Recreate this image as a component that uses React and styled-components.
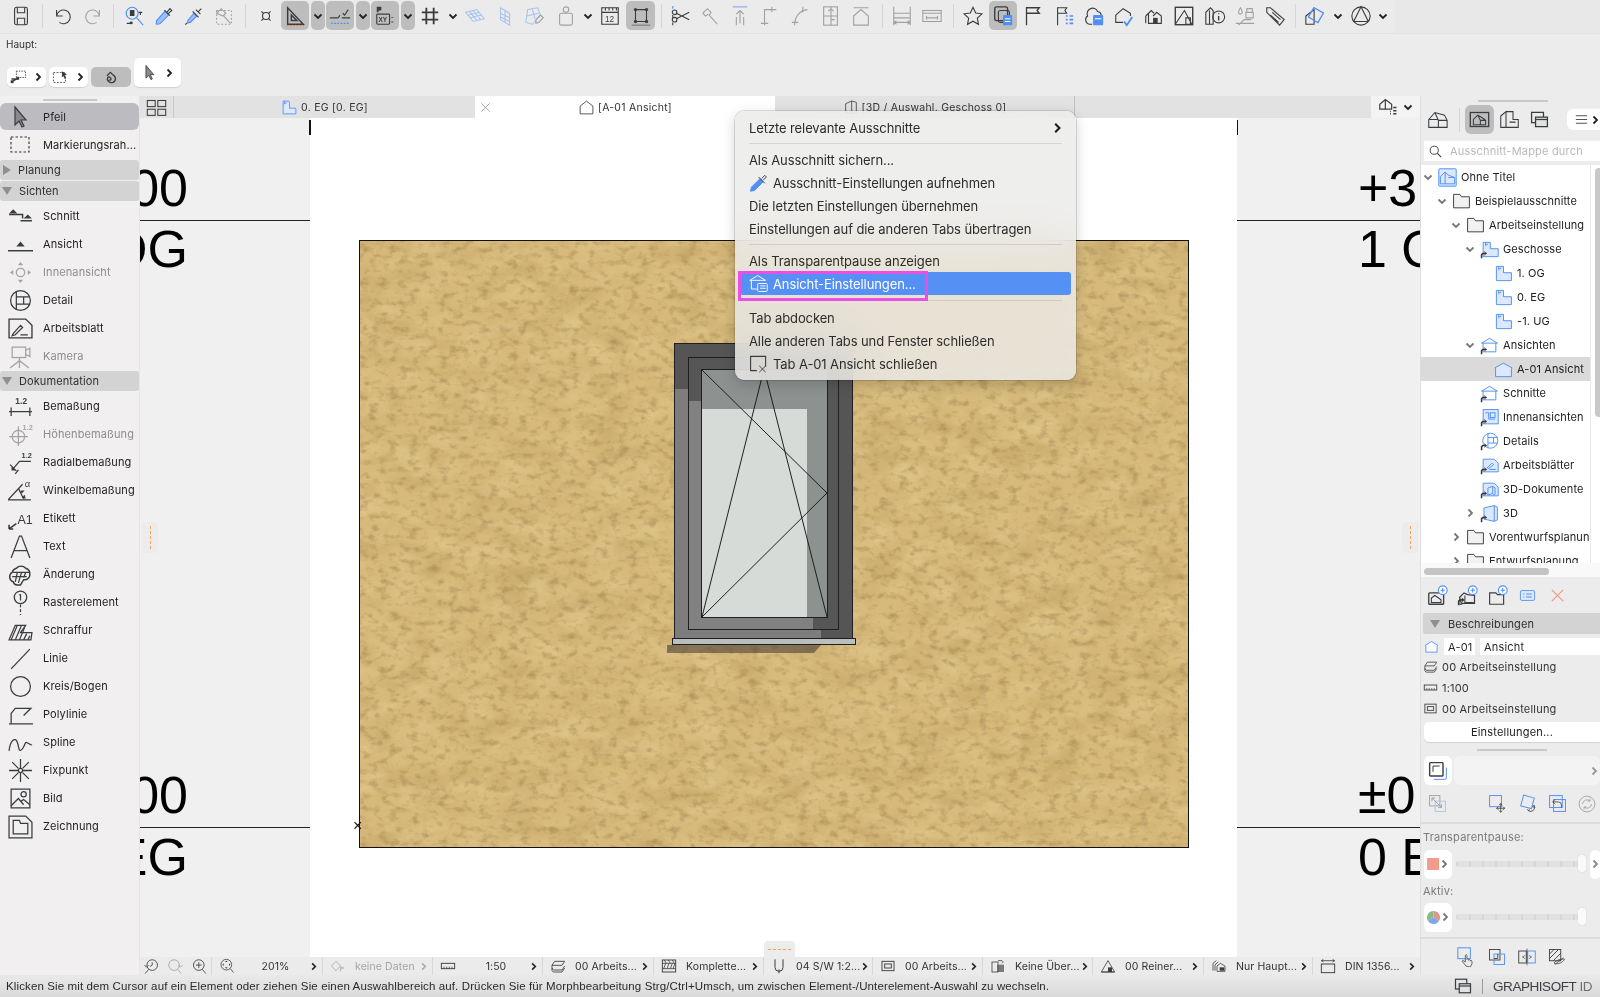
import React from 'react';
import styled, {createGlobalStyle} from 'styled-components';

const BLUE = '#4f8ff7';
const UI = '"Inter", "Liberation Sans", sans-serif';

const Global = createGlobalStyle`
    html, body{
        margin:0;
        padding:0;
        background:#ececec;
    }
    body{
        font-family:${UI};
        color:#2b2b2b;
    }
`;

const Glyph = styled.svg`
    width:${({$s}) => $s}px;
    height:${({$s}) => $s}px;
    flex:none;
    fill:none;
    stroke:currentColor;
    stroke-width:1.2;
    color:${({$c}) => $c || '#3a3d40'};
    opacity:${({$dim}) => $dim ? .42 : 1};
    .b{stroke:${BLUE};}
    .f{fill:currentColor;stroke:none;}
    .fb{fill:${BLUE};stroke:none;}
    .lb{fill:#dbe8fd;stroke:${BLUE};}
    text{fill:currentColor;stroke:none;font-family:"Liberation Sans",sans-serif;font-weight:700;}
    text.n{font-weight:400;}
`;

const Badge = <path className="f" d="M1 23v-5l2-2h3l-1-2 4 3-4 3 1-2H4l-1 1v4z"/>;

const ICONS = {
    save:<><rect x="5" y="2.5" width="14" height="19" rx="2"/><path d="M8 2.5v6h8v-6M8 21.5v-7h8v7"/></>,
    undo:<path d="M5 12a7.500 7.500 0 1 1 3 7M5 5.500V12h6.500"/>,
    redo:<path d="M19 12a7.500 7.500 0 1 0-3 7M19 5.500V12h-6.500"/>,
    find:<><circle className="b" cx="10" cy="9" r="6.500"/><path className="b" d="M15 14l7 8"/><rect className="f" x="7.500" y="5.500" width="5" height="6.500"/><path d="M17 8h4M19 8v3M4 20h6"/><circle className="f" cx="9" cy="19.500" r="1.600"/></>,
    pick:<><path className="b" d="M13 7l4 4-9.500 9.500-3.500.5-.5-.5.5-3.500z" fill="#9dc0fa"/><path d="M12.500 5.500l6 6M15 8l3.500-4 2 2-4 3.500"/></>,
    syringe:<><path className="b" d="M12 9l3 3-7 7-3 .5.5-3z" fill="#9dc0fa"/><path d="M10.500 7l6.500 6.500M14 5l5 5M16.500 7.500L20 4M4.500 19.500L2.500 21.500"/></>,
    hammer:<><rect x="4" y="6" width="16" height="15" strokeDasharray="2 2"/><path d="M4 9l5-5 5 5-3 3zM11 11l8 9"/></>,
    snap:<><path d="M7 7l10 10M17 7L7 17"/><circle cx="12" cy="12" r="3.800" fill="#ececec"/></>,
    square:<><path d="M4 3v18h17zM8 11v6h6z" strokeWidth="1.600"/><path d="M3 22.500h19" stroke="#e58a3a" strokeDasharray="2 1.500" strokeWidth="1.500"/></>,
    guide:<><path d="M1 14h9M14 14h9M10 14l2-3M15 9l2 2 4-6"/><path className="b" d="M2 20h20" strokeDasharray="2 1.500" strokeWidth="1.500"/></>,
    xy:<><path className="f" d="M3 2h5v4H5v2H3z"/><rect x="3" y="10" width="14" height="11" rx="1"/><text x="4.800" y="18.500" fontSize="7">XY</text><path d="M20 13v1M20 18v1" strokeWidth="2"/></>,
    grid:<path d="M8 3v18M16 3v18M3 8h18M3 16h18" strokeWidth="2"/>,
    plane:<path className="b" d="M2 8l12-3 8 10-12 3zM6 7l8 10M10 6l8 10M5 11l12-3M7 14l12-3"/>,
    plane2:<path className="b" d="M7 3l10 6v13L7 16zM12 6v13M7 9l10 5M7 13l10 5"/>,
    planepick:<><path className="b" d="M4 5l11-2 3 8-9 10-7-2zM9 4l3 11M3 12l13-3"/><path d="M13 16l5-5 3 3-5 5-3 1z"/></>,
    weight:<><rect x="5" y="9" width="14" height="13" rx="2"/><circle cx="12" cy="5" r="3"/></>,
    ruler:<><path d="M3 3h18v18H3zM3 8h18M7 3v3M11 3v3M15 3v3M19 3v3"/><text className="n" x="6.500" y="18.500" fontSize="9">12</text></>,
    frame:<><rect x="6" y="5" width="12" height="13" rx="1"/><circle cx="6" cy="5" r="1.800" className="f"/><circle cx="18" cy="5" r="1.800" className="f"/><circle cx="6" cy="18" r="1.800" className="f"/><circle cx="18" cy="18" r="1.800" className="f"/><path d="M2 22h20" strokeOpacity=".5"/></>,
    scissors:<><circle cx="5" cy="16" r="2.500"/><circle cx="5" cy="8" r="2.500"/><path d="M7 9l14 7M7 15l14-7"/><path className="b" d="M3 1v3"/><path d="M3 11v3M3 19v3"/></>,
    tool2:<path d="M3 9l5-5 4 4-2 3 9 10M3 9l3 3 3-2"/>,
    trim:<><path className="b" d="M4 2h16" strokeWidth="2"/><path d="M12 20V6M8 10l4-4 4 4M8 13v9M16 13v9"/></>,
    corner:<path d="M6 22V5h13M2 20h8M6 17v5M14 2v6"/>,
    curve:<path d="M5 22C5 12 11 6 19 5M2 19h7M14 2v6"/>,
    split:<><rect x="4" y="2" width="15" height="20"/><path d="M4 12h15M12 2v20M9 7l3-3 3 3M12 16h4"/></>,
    homeup:<path d="M4 12L12 5l8 7v10H4zM4 3h16"/>,
    dim1:<path d="M3 2v20M21 2v20M3 9h18v5M3 19h18M3 14h18M6 17l-3 2 3 2M18 17l3 2-3 2"/>,
    dim2:<><rect x="2" y="6" width="20" height="12"/><path d="M2 9h20M6 12v4M18 12v4M6 14h12"/></>,
    star:<path d="M12 2.500l2.900 6.300 6.800.8-5 4.700 1.300 6.800-6-3.400-6 3.400 1.300-6.800-5-4.700 6.800-.8z"/>,
    layersel:<><rect x="3" y="2" width="14" height="15" rx="2" strokeWidth="1.500"/><rect x="7" y="6" width="12" height="13" rx="2"/><rect className="fb" x="12" y="11" width="10" height="11" rx="1"/><path d="M14 15h6M14 18h6" stroke="#fff"/></>,
    flag:<path d="M6 22V3h14l-2.500 3 2.500 3H6" strokeWidth="1.400"/>,
    flaglist:<><path d="M5 22V3h10l-2 3 2 3H5"/><path className="b" d="M14 12h2M18 12h4M14 16h2M18 16h4M14 20h2M18 20h4" strokeWidth="1.800"/></>,
    cloud:<><path d="M10 21H7a5 5 0 0 1-2-9 6 6 0 0 1 11-5 5 5 0 0 1 4 4"/><rect className="fb" x="11" y="11" width="11" height="11" rx="1"/><path d="M13 15h7" stroke="#fff"/></>,
    housecheck:<><path d="M3 11l8-7 8 5v3M3 11v8h8"/><path className="b" d="M12 18l3 4 6-9" strokeWidth="2"/></>,
    houses:<><path d="M3 12l6-6 3 3M3 12v8M6 9v11h14V12l-5-4-4 4"/><rect x="11" y="14" width="5" height="6" className="f"/></>,
    elev3d:<path d="M2 12l7-8 11 3 3 6v8H2zM9 4l4 9v8M13 13h10M2 12h11"/>,
    sheet:<><rect x="2.500" y="2.500" width="19" height="19" strokeWidth="1.500"/><path d="M2.500 21l10-15 8 15M14 14h5v7h-5z"/></>,
    sheetView:<><rect x="1.500" y="4" width="21" height="16" strokeWidth="1.500"/><path d="M5 18v-6l5-5 5 3 4 3v5zM10 7l3 6v5M13 13h6"/></>,
    planCorner:<path d="M2 8l6-5v18H2zM8 3h8v9h6v9H8M12 15h7"/>,
    info:<><path d="M2 21V8l5-5 3 3v15zM6 6v15"/><circle cx="16" cy="13" r="6.500"/><path d="M16 12v5M16 9v1" strokeWidth="1.500"/></>,
    paint:<path d="M7 3c2 3 2 4 2 5a2 2 0 0 1-4 0c0-1 0-2 2-5zM14 4h6v4h-6zM13 8h8v6h-8zM2 20h20M5 22l6-6h8"/>,
    tag:<path d="M3 6V3h4l15 13-5 6L3 8zM5 5.500h.1M9 8l9 8M7 11l9 8"/>,
    cube:<><path d="M2 12l9-7v16H2z"/><rect className="b" x="7" y="5" width="12" height="12" transform="rotate(30 13 11)" strokeWidth="1.400"/></>,
    delta:<><circle cx="12" cy="12" r="10"/><path d="M12 2L4 18h16z"/></>,
    gridtabs:<><rect x="1.500" y="4" width="9" height="7"/><rect x="13.500" y="4" width="9" height="7"/><rect x="1.500" y="14" width="9" height="7"/><rect x="13.500" y="14" width="9" height="7"/></>,
    planview:<><path className="lb" d="M3 3h8l1 2v8h9v8H3z" fill="#fff"/><path className="b" d="M5 3v4l3-2"/></>,
    elev:<path d="M3 10l9-7 9 7v11H3z"/>,
    elevlist:<><path d="M1 14V8l7-6 8 6v6H1zM8 2v12" strokeWidth="1.500"/><path d="M18 12h4M18 16h4M18 20h4M14 17h1M14 20h1" strokeWidth="1.800"/></>,
    d3:<path d="M4 7l9-4 7 2v15l-7 2-9-2zM13 3v19"/>,
    closeX:<path d="M3 3l18 18M21 3L3 21" strokeWidth="1.400"/>,
    selA:<><rect x="9" y="3" width="13" height="9" strokeDasharray="2 1.500"/><path d="M3 18l8-5M2 14h10" strokeWidth="2"/><rect className="f" x="1" y="16" width="4" height="4"/><rect className="f" x="9" y="11" width="4" height="4"/></>,
    selB:<><rect x="2" y="5" width="17" height="14" strokeDasharray="2.500 2"/><path className="f" d="M14 3l7 5-3 1 2 4-2 1-2-4-2 2z"/></>,
    orbit:<path d="M6 10l5-5 3 3M14 8c6 3 6 10 1 12-5 2-10-3-8-7 1-2 5-1 5 2 0 2-2 2-3 1" strokeWidth="2"/>,
    arrowfilled:<path d="M7 2v18l4-4 3 6 2-1-3-6h5z" fill="#8a8a8d"/>,
    marq:<rect x="3" y="4" width="18" height="15" strokeDasharray="2.500 2"/>,
    schnitt:<><path d="M1 10h13v4M12 16h11" strokeWidth="1.400"/><path className="f" d="M5 5l4 4H1zM19 10l4 4h-8z"/></>,
    ansicht:<><path d="M0 18h24" strokeWidth="1.400"/><path className="f" d="M12 9l4 5H8z"/></>,
    innen:<><circle cx="12" cy="12" r="4"/><path className="f" d="M12 2l2.500 3h-5zM12 22l2.500-3h-5zM2 12l3 2.500v-5zM22 12l-3 2.500v-5z"/></>,
    detail:<><circle cx="12" cy="12" r="9.500"/><path d="M8 3v18M8 8.500h12.500M8 15.500h12.500M15 8.500v7"/></>,
    blatt:<><path d="M1 3h16l6 6v12H1z" strokeWidth="1.300"/><path d="M5 17l7-8 2 2-7 7-3 1zM12 18h7"/></>,
    kamera:<><rect x="4" y="3" width="13" height="10"/><path d="M17 6l4-2v8l-4-2M11 13v3M2 23l9-7 9 7M11 16v7"/></>,
    bema:<><text x="7" y="10" fontSize="8">1.2</text><path d="M1 17h22M3 13v8M21 13v8"/></>,
    hoehe:<><text x="14" y="8" fontSize="7">1.2</text><circle cx="10" cy="14" r="6"/><path d="M10 4v19M1 14h18"/></>,
    radial:<><text x="13" y="8" fontSize="7">1.2</text><path d="M22 11H11L4 19M7 19l-3 0 0-3M2 14l6 6M7 23l3-4"/></>,
    winkel:<><path d="M0 21h22M0 21L14 6" strokeWidth="1.300"/><path d="M10 10l5 10"/><path className="f" d="M12 12l4 0-3 3zM13 19l3-3 1 4z"/><text className="n" x="16" y="9" fontSize="9">α</text></>,
    etikett:<><path d="M1 22l7-5M1 22v-4M1 22h4" strokeWidth="1.500"/><text className="n" x="9" y="17" fontSize="12">A1</text></>,
    textA:<path d="M3 23L11 2h2l8 21M6 16h12"/>,
    aend:<><path d="M5 19a5 5 0 0 1-1-9 6 6 0 0 1 4-4 6 6 0 0 1 9 0 6 6 0 0 1 4 6 5 5 0 0 1-6 5l-3 5h-3a4 4 0 0 1-4-3z" strokeWidth="1.400"/><path d="M5 10h16M9 10l-2 9M13 10l-3 10M17 10l-2 5M4 14h14"/></>,
    raster:<><circle cx="12" cy="7" r="6"/><path d="M12 4v6M11 5l1-1"/><path d="M12 14v10" strokeDasharray="2.500 2"/></>,
    schraffur:<><path d="M1 21L7 7h10l-5 7h11l-1 7z"/><path d="M3 21L9 7M7 21l6-14M11 21l5-12M15 21l3-6M19 21l2-4"/></>,
    linie:<path d="M3 22L21 3"/>,
    kreis:<circle cx="12" cy="12" r="9.500"/>,
    poly:<path d="M3 21V11l4-5h15l-7 7M1 21h23"/>,
    spline:<path d="M1 20c1-10 6-14 8-8s1 9 4 7 3-8 5-7 4 3 5 2"/>,
    fix:<><circle cx="12" cy="12" r="2"/><path d="M12 1v9M12 14v9M1 12h9M14 12h9M4 4l6 6M14 14l6 6M20 4l-6 6M10 14l-6 6"/></>,
    bild:<><rect x="3" y="3" width="18" height="18"/><circle cx="15" cy="8" r="2.500"/><path d="M3 19l7-7 5 6M12 15l3-2 6 5"/></>,
    zeichnung:<><path d="M1 2h16l6 6v15H1z"/><path d="M5 6h6l1 3h7v10H5z"/></>,
    folder:<path d="M2 20V3h8l2 3h10v14z" fill="#f1f1f1"/>,
    planTree:<><path className="lb" d="M3 3h9v8h10v10H3z" fill="#fff"/><path className="b" d="M6 3v4l3-2"/></>,
    planBadge:<><path className="lb" d="M4 3h9v8h10v10H4z"/><path className="b" d="M7 3v4l3-2"/>{Badge}</>,
    elevTree:<path className="lb" d="M1 10l11-6 11 6-1 1v10H2V11z" fill="#fff"/>,
    elevBadge:<><path className="b" d="M2 9l10-6 10 6M4 9v11h16V9"/><path className="b" d="M2 9h20"/>{Badge}</>,
    root:<><rect className="b" x="1" y="1" width="22" height="22" rx="1" fill="#dbe8fd"/><path className="b" d="M3 20v-9l6-6 4 4 8 3v8zM9 5v15M13 12h8"/></>,
    innenT:<><rect className="lb" x="4" y="2" width="19" height="18"/><rect className="b" x="13" y="6" width="6" height="6"/><path className="b" d="M7 6h4v8h8"/>{Badge}</>,
    detailT:<><circle className="b" cx="13" cy="11" r="9.500"/><path className="b" d="M10 2v18M10 7h12M10 14h12M17 7v7"/>{Badge}</>,
    blattT:<><path className="lb" d="M4 4h14l5 5v11H4z"/><path className="b" d="M9 15l6-6 2 2-6 5zM12 17h8"/>{Badge}</>,
    d3doc:<><path className="lb" d="M4 4h14l5 5v11H4z"/><path className="b" d="M10 10l6-2v9l-6 2zM16 8l3 2v8l-3 1"/>{Badge}</>,
    d3T:<><path className="lb" d="M5 5l13-3 4 2v16l-4 2-13-3z"/><path className="b" d="M18 2v20"/>{Badge}</>,
    search:<><circle cx="10" cy="10" r="6.500" strokeWidth="1.500"/><path d="M15 15l6 6" strokeWidth="1.800"/></>,
    menuLines:<path d="M3 6h18M3 12h18M3 18h18" strokeWidth="1.400"/>,
    newView:<><rect x="2" y="9" width="17" height="13" rx="1" strokeWidth="1.500"/><path d="M5 20v-5l4-3 3 2 4 3v3z"/><circle className="b" cx="18" cy="6" r="5" fill="#fff"/><path className="b" d="M18 3.500v5M15.500 6h5"/></>,
    newClone:<><path d="M3 14l5-5 4 2 8 1v9H5zM3 22h3" strokeWidth="1.400"/><path d="M9 12v8h10"/><circle className="b" cx="18" cy="6" r="5" fill="#fff"/><path className="b" d="M18 3.500v5M15.500 6h5"/>{Badge}</>,
    newFolder:<><path d="M3 22V9h7l2 2h7v11z" strokeWidth="1.300"/><circle className="b" cx="18" cy="6" r="5" fill="#fff"/><path className="b" d="M18 3.500v5M15.500 6h5"/></>,
    list:<><rect className="lb" x="2" y="5" width="20" height="14" rx="2" fill="#cfe0fc"/><path className="b" d="M6 10h1.500M6 14h1.500M10 10h8M10 14h8" strokeWidth="1.500"/></>,
    cross:<path d="M4 4l16 16M20 4L4 20" stroke="#ef9a8c" strokeWidth="1.800"/>,
    elevSmall:<path className="b" d="M2 10l10-6 10 6-1 1v10H3V11z" fill="#fff" strokeWidth="1.400"/>,
    stack:<path d="M3 11l4-6h15l-4 6zM3 15l2 3h13l4-6M3 19l2 2h13l4-6M3 11v8" strokeWidth="1.300"/>,
    rulerS:<><rect x="2" y="8" width="20" height="8" strokeWidth="1.400"/><path d="M6 13v3M10 13v3M14 13v3M18 13v3"/></>,
    penset:<><rect x="3" y="5" width="18" height="14" strokeWidth="1.400"/><rect x="7" y="9" width="10" height="6" strokeWidth="1.400"/></>,
    navFrame:<><rect x="2" y="2" width="16" height="16" rx="1" strokeWidth="1.700"/><path d="M6 13V6h8"/><path className="b" d="M7 22h13a2 2 0 0 0 2-2V8"/></>,
    fitIn:<><rect x="2" y="2" width="13" height="13"/><rect className="b" x="9" y="9" width="13" height="13"/><path d="M5 5l12 12M5 5h4M5 5v4M17 17h-4M17 17v-4"/></>,
    moveN:<><rect className="b" x="2" y="2" width="15" height="14"/><path d="M16 12v11M10.500 18h11M14 14l2-2 2 2M14 21l2 2 2-2M13 16l-2 2 2 2M19 16l2 2-2 2" strokeWidth="1"/></>,
    rotateN:<><rect className="b" x="5" y="3" width="14" height="14" transform="rotate(15 12 10)"/><path d="M20 14a5 5 0 0 1-7 7M12 19l1 2 2-1M20 14l1 3-3-1" strokeWidth="1"/></>,
    flipN:<><rect className="b" x="2" y="2" width="16" height="15"/><rect className="b" x="7" y="7" width="15" height="15"/><path d="M9 7l-3 3 3 3M6 10h7a4 4 0 0 1 4 4v3" strokeWidth="1"/></>,
    syncN:<><circle cx="12" cy="12" r="10.500"/><path d="M6 12a6 6 0 0 1 10-4M18 12a6 6 0 0 1-10 4M16 5v3h-3M8 19v-3h3"/></>,
    handN:<><rect className="b" x="1" y="1" width="15" height="13"/><path d="M11 23l-5-6 1-1 3 2v-8l1-1 1 1v5l1-1 1 1v1l1-1 1 1v1l1-1 1 1v3l-2 4z" fill="#ececec" strokeWidth=".9"/></>,
    overlapN:<><rect x="2" y="2" width="14" height="14"/><rect className="b" x="8" y="8" width="14" height="14"/><path d="M8 14h5V8"/></>,
    splitN:<><rect x="1" y="4" width="10" height="16"/><rect className="b" x="13" y="4" width="10" height="16"/><path d="M12 1v22M9 10l-3 2 3 2M15 10l3 2-3 2" strokeWidth="1"/></>,
    hatchN:<><rect x="2" y="2" width="15" height="15"/><path d="M2 8l6-6M2 14l12-12M7 17L17 7"/><path d="M8 20c3-4 10-6 14-5-2 4-9 8-14 5zM9 22l12-9" strokeWidth="1"/></>,
    windows:<><rect x="2" y="3" width="15" height="13" strokeWidth="1.600"/><rect x="7" y="9" width="15" height="12" fill="#e2e2e2" strokeWidth="1.600"/><path d="M7 12h15" strokeWidth="1.600"/></>,
    zoomBack:<><circle cx="13" cy="10" r="7.500"/><path d="M8 16l-5 6M2 10l3 3 3-3M13 6v4l-3 2"/></>,
    zoomNext:<><circle cx="10" cy="10" r="7.500"/><path d="M15 16l5 6M22 10l-3 3-3-3"/></>,
    zoomIn:<><circle cx="11" cy="10" r="7.500"/><path d="M16 16l5 6M11 6v8M7 10h8"/></>,
    zoomFit:<><circle cx="11" cy="10" r="8"/><path d="M17 16l5 6"/><path className="f" d="M11 4l2 2H9zM11 16l2-2H9zM5 10l2-2v4zM17 10l-2-2v4z"/></>,
    noData:<path d="M2 12l7-7 7 7-7 7zM15 20l3-7M15 15h6"/>,
    hatchS:<><rect x="2" y="3" width="20" height="18" strokeWidth="1.400"/><path d="M2 8h20M2 16h20M7 8l-3 8M12 8l-3 8M17 8l-3 8M21 8l-3 8M5 3l3 5M11 3l3 5M17 3l3 5"/></>,
    penS:<path d="M6 2v12a6 6 0 0 0 12 0V2M12 17v6" strokeWidth="1.500"/>,
    overrideS:<><rect x="3" y="6" width="9" height="15"/><rect className="f" x="11" y="10" width="10" height="11" opacity=".65"/><path d="M12 4h6l2 2-2 2"/></>,
    renoS:<><path d="M2 21L12 4l10 17zM2 21h20"/><rect className="f" x="12" y="14" width="6" height="7"/></>,
    structS:<><path d="M3 19V8l5-4M6 19V10l5-4M9 19V12l5-4 7 4v8H9z"/><rect className="f" x="13" y="14" width="7" height="5"/></>,
    dimS:<><rect x="2" y="9" width="20" height="13" strokeWidth="1.400"/><path d="M2 4h20M5 2l-3 2 3 2M19 2l3 2-3 2"/></>,
    penMenu:<><path d="M14 7l4 4-11 11-5 1 1-5z" fill={BLUE} stroke={BLUE}/><path d="M12 5l8 8M16 7l4-4 2 2-4 4"/></>,
    elevMenu:<><path d="M1 8l10-6 10 6M1 8h20M3 8v11h7" stroke="#fff"/><rect x="11" y="12" width="12" height="10" rx="1" fill={BLUE} stroke="#fff"/><path d="M14 15h7M14 18h7" stroke="#fff"/></>,
    closeTab:<><path d="M10 21H2V3h19v13" strokeWidth="1.400"/><path d="M13 15l8 8M21 15l-8 8"/></>,
};

function Ico({n, s = 22, c, dim}) {
    return <Glyph viewBox="0 0 24 24" $s={s} $c={c} $dim={dim}>{ICONS[n]}</Glyph>;
}

const Chev = styled.svg`
    width:${({$s}) => $s || 10}px;
    height:${({$s}) => $s || 10}px;
    flex:none;
    fill:none;
    stroke:${({$c}) => $c || '#222'};
    stroke-width:1.8;
`;
const Down = (props) => <Chev viewBox="0 0 10 10" {...props}><path d="M1.500 3.500L5 7l3.500-3.500"/></Chev>;
const Right = (props) => <Chev viewBox="0 0 10 10" {...props}><path d="M3.500 1.500L7 5 3.500 8.500"/></Chev>;
const Tri = styled.i`
    display:block;
    width:0;
    height:0;
    border-style:solid;
    border-color:transparent;
    ${({$open}) => $open
        ? 'border-width:8px 5px 0 5px;border-top-color:#8f8f8f;'
        : 'border-width:5px 0 5px 8px;border-left-color:#8f8f8f;'}
`;

const Page = styled.div`
    position:relative;
    width:1600px;
    height:997px;
    overflow:hidden;
    display:flex;
    flex-direction:column;
    background:#ececec;
`;

const ToolBar = styled.div`
    height:34px;
    flex:none;
    display:flex;
    align-items:flex-start;
    padding:1px 0 0 6px;
    box-sizing:border-box;
    background:linear-gradient(90deg,#ebebeb 1394px,#e8e8e8 1394px);
    border-bottom:1px solid #e3e3e3;
`;
const Tool = styled.span`
    width:${({$w}) => $w || 30}px;
    margin-left:${({$ml}) => $ml || 0}px;
    height:29px;
    flex:none;
    display:flex;
    align-items:center;
    justify-content:center;
    border-radius:5px;
    background:${({$on}) => $on ? '#bdbdbd' : 'transparent'};
`;
const ToolSep = styled.span`
    width:${({$w}) => $w || 12}px;
    height:29px;
    flex:none;
    display:flex;
    justify-content:center;
    align-items:center;
    &::before{
        content:"";
        width:1px;
        height:24px;
        background:#d6d6d6;
    }
`;

const InfoRow = styled.div`
    height:62px;
    flex:none;
    padding:4px 0 0 6px;
    box-sizing:border-box;
    font-size:10px;
    color:#333;
    display:flex;
    flex-direction:column;
`;
const Pills = styled.div`
    display:flex;
    align-items:flex-end;
    gap:3px;
    margin:8px 0 0 1px;
`;
const Pill = styled.div`
    width:${({$w}) => $w || 39}px;
    height:${({$tall}) => $tall ? 29 : 20}px;
    border-radius:5px;
    display:flex;
    align-items:center;
    justify-content:center;
    gap:6px;
    background:${({$on}) => $on ? '#bdbdbd' : '#fff'};
    box-shadow:${({$on}) => $on ? 'none' : '0 1px 1px rgba(0,0,0,.12)'};
`;

const Body = styled.div`
    flex:1;
    display:grid;
    grid-template-columns:140px 1fr 180px;
    grid-template-rows:minmax(0,1fr);
    min-height:0;
`;

const LeftPanel = styled.div`
    background:#f1eff0;
    border-right:1px solid #e5e5e5;
    box-sizing:border-box;
    display:flex;
    flex-direction:column;
    overflow:hidden;
`;
const Grip = styled.div`
    width:${({$w}) => $w || 54}px;
    height:2px;
    background:#c9c9c9;
    margin:${({$m}) => $m || '3px auto 2px'};
    flex:none;
`;
const ToolRow = styled.div`
    height:${({$h}) => $h || 28}px;
    flex:none;
    display:flex;
    align-items:center;
    font-size:11px;
    letter-spacing:.1px;
    color:${({$dim}) => $dim ? '#8d8d8d' : '#232323'};
    border-radius:6px;
    background:${({$on}) => $on ? '#bcbbbf' : 'transparent'};
`;
const ToolIcon = styled.span`
    width:40px;
    margin-right:3px;
    flex:none;
    display:flex;
    justify-content:center;
`;
const SectionHead = styled.div`
    height:20px;
    flex:none;
    margin-top:${({$mt}) => $mt || 0}px;
    margin-bottom:1px;
    display:flex;
    align-items:center;
    gap:7px;
    padding-left:${({$pad}) => $pad || 3}px;
    font-size:11px;
    letter-spacing:.1px;
    color:#2f2f2f;
    background:#d3d3d3;
    border-radius:3px;
`;

const Center = styled.div`
    display:flex;
    flex-direction:column;
    min-width:0;
    min-height:0;
`;
const TabBar = styled.div`
    height:22px;
    flex:none;
    display:flex;
    background:#e2e2e2;
    font-size:10.5px;
    letter-spacing:.25px;
    color:#333;
`;
const GridCell = styled.div`
    width:34px;
    display:flex;
    align-items:center;
    justify-content:center;
    border-right:1px solid #c8c8c8;
    box-sizing:border-box;
`;
const Tab = styled.div`
    width:${({$w}) => $w}px;
    position:relative;
    display:flex;
    align-items:center;
    justify-content:center;
    gap:3px;
    box-sizing:border-box;
    background:${({$on}) => $on ? '#fff' : 'transparent'};
    border-right:${({$edge}) => $edge ? '1px solid #c0c0c0' : 'none'};
`;
const CloseX = styled.span`
    position:absolute;
    left:5px;
    top:6px;
    display:flex;
`;
const TabFill = styled.div`
    flex:1;
`;
const ViewSwitch = styled.div`
    width:49px;
    background:#f3f3f3;
    display:flex;
    align-items:center;
    justify-content:center;
    gap:5px;
`;

const Canvas = styled.div`
    flex:1;
    min-height:0;
    position:relative;
    overflow:hidden;
    padding-left:170px;
    background:#f1f0f1;
`;
const Paper = styled.div`
    width:927px;
    height:100%;
    padding:122px 0 0 49px;
    box-sizing:border-box;
    background:#fff;
    position:relative;
    &::before, &::after{
        content:"";
        position:absolute;
        top:2px;
        width:1.5px;
        height:15px;
        background:#111;
    }
    &::before{left:-1px;}
    &::after{right:-1px;}
`;
const WallSvg = styled.svg`
    display:block;
    width:830px;
    height:608px;
`;
const LevelText = styled.div`
    position:absolute;
    top:${({$y}) => $y}px;
    ${({$side}) => $side === 'left' ? 'right:1232px;' : 'left:1218px;right:0;overflow:hidden;'}
    font-family:"Liberation Sans",Arial,sans-serif;
    font-size:52px;
    line-height:52px;
    color:#000;
    white-space:nowrap;
`;
const LevelLine = styled.div`
    position:absolute;
    top:${({$y}) => $y}px;
    height:1px;
    background:#222;
    ${({$side}) => $side === 'left' ? 'left:0;width:170px;' : 'left:1097px;right:0;'}
`;
const Mark = styled.span`
    position:absolute;
    left:213px;
    top:700px;
    font:16px/16px "Liberation Sans",sans-serif;
    color:#111;
`;
const Handle = styled.div`
    position:absolute;
    display:flex;
    align-items:center;
    justify-content:center;
    background:#ececec;
    ${({$at}) => $at === 'bottom'
        ? 'left:624px;bottom:0;width:31px;height:16px;border-radius:4px 4px 0 0;'
        : `top:404px;width:16px;height:31px;${$at === 'left' ? 'left:2px;border-radius:0 4px 4px 0;' : 'right:2px;border-radius:4px 0 0 4px;'}`}
    &::before{
        content:"";
        ${({$at}) => $at === 'bottom'
            ? 'width:23px;height:0;border-top:1.5px dashed #f3a55a;'
            : 'height:23px;width:0;border-left:1.5px dashed #f3a55a;'}
    }
`;

const StatusItems = styled.div`
    height:18px;
    flex:none;
    display:flex;
    background:#ebebeb;
    font-size:10.5px;
    letter-spacing:.1px;
    color:#333;
`;
const NavGroup = styled.div`
    width:72px;
    flex:none;
    display:flex;
    align-items:center;
    gap:7px;
    padding-left:3px;
    box-sizing:border-box;
    border-right:1px solid #d8d8d8;
`;
const Seg = styled.div`
    width:${({$w}) => $w}px;
    flex:none;
    display:flex;
    align-items:center;
    padding:0 4px 0 7px;
    box-sizing:border-box;
    border-right:${({$last}) => $last ? 'none' : '1px solid #d8d8d8'};
    color:${({$dim}) => $dim ? '#a5a5a5' : 'inherit'};
`;
const SegLabel = styled.span`
    flex:1;
    padding-left:${({$center}) => $center ? 7 : 9}px;
    text-align:${({$center}) => $center ? 'center' : 'left'};
    white-space:nowrap;
`;

const RightPanel = styled.div`
    background:#ececec;
    border-left:1px solid #dedede;
    box-sizing:border-box;
    display:flex;
    flex-direction:column;
    min-width:0;
    min-height:0;
    overflow:hidden;
`;
const PanelTabs = styled.div`
    height:45px;
    flex:none;
    position:relative;
    display:flex;
    align-items:center;
    padding:2px 0 0 0;
    box-sizing:border-box;
`;
const GripTop = styled(Grip)`
    position:absolute;
    top:4px;
    left:57px;
    margin:0;
    width:70px;
`;
const PanelTab = styled.span`
    width:${({$w}) => $w || 30}px;
    height:29px;
    flex:none;
    display:flex;
    align-items:center;
    justify-content:center;
    border-radius:6px;
    background:${({$on}) => $on ? '#bdbdbd' : 'transparent'};
`;
const MenuPill = styled.span`
    margin-left:auto;
    width:33px;
    height:21px;
    background:#fff;
    border-radius:6px 0 0 6px;
    display:flex;
    align-items:center;
    justify-content:flex-end;
    gap:1px;
`;
const SearchBox = styled.div`
    height:20px;
    flex:none;
    margin:0 0 4px 3px;
    background:#fff;
    display:flex;
    align-items:center;
    gap:7px;
    padding-left:4px;
    font-size:11px;
    letter-spacing:.2px;
    color:#b9b9b9;
    white-space:nowrap;
    overflow:hidden;
`;
const TreeWrap = styled.div`
    height:398px;
    flex:none;
    display:flex;
    background:#fff;
`;
const TreeList = styled.div`
    width:169px;
    flex:none;
    overflow:hidden;
    border-right:1px solid #e8e8e8;
`;
const TreeRow = styled.div`
    height:24px;
    display:flex;
    align-items:center;
    padding-left:${({$level}) => $level * 14 + 1}px;
    font-size:11px;
    letter-spacing:.1px;
    color:#222;
    white-space:nowrap;
    background:${({$on}) => $on ? '#dadada' : 'transparent'};
`;
const TreeChev = styled.span`
    width:12px;
    flex:none;
    display:flex;
    justify-content:center;
`;
const TreeIcon = styled.span`
    width:27px;
    flex:none;
    display:flex;
    justify-content:center;
`;
const VScroll = styled.div`
    flex:1;
    padding:3px 0 0 4px;
    &::before{
        content:"";
        display:block;
        height:249px;
        border-radius:4px 0 0 4px;
        background:#c8c8c8;
    }
`;
const HScroll = styled.div`
    height:14px;
    flex:none;
    background:#f9f9f9;
    padding:5px 0 0 3px;
    box-sizing:border-box;
    &::before{
        content:"";
        display:block;
        width:125px;
        height:7px;
        border-radius:4px;
        background:#c4c4c4;
    }
`;
const IconRow = styled.div`
    height:${({$h}) => $h || 36}px;
    flex:none;
    display:flex;
    align-items:center;
    padding-left:${({$pad}) => $pad || 1}px;
    border-bottom:${({$line}) => $line ? '2px solid #dcdcdc' : 'none'};
    box-sizing:border-box;
`;
const IconCell = styled.span`
    width:${({$w}) => $w || 30}px;
    flex:none;
    display:flex;
    justify-content:center;
`;
const DescHead = styled(SectionHead)`
    margin:0 0 0 2px;
    height:21px;
    gap:8px;
    padding-left:7px;
    border-radius:2px 0 0 2px;
`;
const IdRow = styled.div`
    height:23px;
    flex:none;
    display:flex;
    align-items:center;
    gap:5px;
    padding:2px 0 0 2px;
    box-sizing:border-box;
    font-size:11px;
`;
const IdField = styled.span`
    height:17px;
    width:${({$w}) => $w ? `${$w}px` : 'auto'};
    flex:${({$w}) => $w ? 'none' : 1};
    margin-left:${({$ml}) => $ml || 0}px;
    padding-left:4px;
    box-sizing:border-box;
    background:#fff;
    display:flex;
    align-items:center;
    letter-spacing:.2px;
`;
const DescRow = styled.div`
    height:21px;
    flex:none;
    margin-top:${({$mt}) => $mt || 0}px;
    display:flex;
    align-items:center;
    gap:4px;
    padding-left:2px;
    font-size:11px;
    letter-spacing:.2px;
    color:#333;
`;
const WideButton = styled.div`
    height:20px;
    flex:none;
    margin:3px 0 0 3px;
    background:#fff;
    border-radius:5px 0 0 5px;
    display:flex;
    align-items:center;
    justify-content:center;
    font-size:11px;
    letter-spacing:.2px;
    color:#222;
    box-shadow:0 1px 1px rgba(0,0,0,.1);
`;
const NavRow = styled.div`
    height:29px;
    flex:none;
    display:flex;
    gap:2px;
    margin:1px 0 0 3px;
`;
const NavBox = styled.div`
    width:${({$w}) => $w || 28}px;
    flex:${({$grow}) => $grow ? 1 : 'none'};
    height:${({$h}) => $h || 29}px;
    background:${({$pale}) => $pale ? '#f3f3f3' : '#fff'};
    border-radius:6px;
    display:flex;
    align-items:center;
    justify-content:${({$end}) => $end ? 'flex-end' : 'center'};
    padding-right:${({$end}) => $end ? 1 : 0}px;
    box-sizing:border-box;
`;
const PanelLabel = styled.div`
    height:${({$h}) => $h || 18}px;
    flex:none;
    padding-left:2px;
    display:flex;
    align-items:center;
    font-size:11px;
    letter-spacing:.2px;
    color:#7b7b7b;
`;
const SliderRow = styled.div`
    height:28px;
    flex:none;
    display:flex;
    align-items:center;
    gap:4px;
    padding-left:3px;
`;
const Slider = styled.div`
    width:130px;
    height:6px;
    flex:none;
    position:relative;
    border-radius:3px;
    background:repeating-linear-gradient(90deg,#d7d7d7 0 2px,#e1e1e1 2px 13px);
`;
const Thumb = styled.span`
    position:absolute;
    right:0;
    top:-6px;
    width:8px;
    height:17px;
    border-radius:3px;
    background:#fafafa;
    box-shadow:0 0 1px rgba(0,0,0,.25);
`;
const Swatch = styled.span`
    width:12px;
    height:12px;
    background:#f29b8e;
`;

const BottomBar = styled.div`
    height:22px;
    flex:none;
    display:flex;
    align-items:center;
    padding-left:6px;
    background:linear-gradient(#e9e9e9,#dadada);
    font:11.5px "Liberation Sans",Arial,sans-serif;
    letter-spacing:.12px;
    color:#2a2a2a;
`;
const Hint = styled.span`
    flex:1;
    white-space:nowrap;
`;
const Brand = styled.span`
    display:flex;
    align-items:center;
    gap:10px;
    padding-right:8px;
    font:13.5px "Liberation Sans",Arial,sans-serif;
    letter-spacing:-.45px;
    color:#3b4046;
    i{
        display:block;
        width:1px;
        height:15px;
        background:#9a9a9a;
    }
    em{
        font-style:normal;
        color:#6d7278;
    }
`;

const Menu = styled.div`
    position:absolute;
    left:735px;
    top:111px;
    width:341px;
    height:269px;
    box-sizing:border-box;
    padding:5px 0;
    border-radius:9px;
    background:rgba(235,235,233,.84);
    backdrop-filter:blur(24px) saturate(1.2);
    box-shadow:0 0 0 1px rgba(0,0,0,.12),0 4px 14px rgba(0,0,0,.18);
    font-size:13px;
    letter-spacing:-.1px;
    color:#2d2c2a;
`;
const MenuItem = styled.div`
    height:23px;
    display:flex;
    align-items:center;
    gap:5px;
    padding:0 8px 0 9px;
    margin:0 5px;
    border-radius:3px;
    white-space:nowrap;
    color:${({$on}) => $on ? '#fff' : 'inherit'};
    background:${({$on}) => $on ? '#5590f5' : 'transparent'};
`;
const MenuNext = styled.span`
    margin-left:auto;
    display:flex;
`;
const MenuSep = styled.div`
    height:1px;
    margin:${({$m}) => $m || 4}px 14px;
    background:rgba(0,0,0,.11);
`;
const PinkBox = styled.div`
    position:absolute;
    left:3px;
    top:160px;
    width:190px;
    height:30px;
    box-sizing:border-box;
    border:3px solid #e94fe3;
    pointer-events:none;
`;

const TOP_TOOLS = [
    {i:'save'}, {sep:12}, {i:'undo'}, {i:'redo', dim:1}, {sep:11},
    {i:'find'}, {i:'pick'}, {i:'syringe'}, {i:'hammer', dim:1}, {sep:12},
    {i:'snap'}, {i:'square', on:1, w:28}, {ch:1, on:1, w:14, ml:2}, {i:'guide', on:1, w:28, ml:1}, {ch:1, on:1, w:14, ml:2},
    {i:'xy', on:1, w:28, ml:1}, {ch:1, on:1, w:14, ml:2},
    {i:'grid'}, {ch:1, w:15}, {i:'plane', dim:1}, {i:'plane2', dim:1}, {i:'planepick', dim:1}, {i:'weight', dim:1, w:31}, {ch:1, w:14},
    {i:'ruler'}, {i:'frame', on:1, ml:1, w:29}, {sep:12}, {i:'scissors', ml:-1}, {i:'tool2', dim:1}, {i:'trim', dim:1, ml:-1},
    {i:'corner', dim:1}, {i:'curve', dim:1, w:31}, {i:'split', dim:1}, {i:'homeup', dim:1}, {sep:12}, {i:'dim1', dim:1, ml:-1}, {i:'dim2', dim:1},
    {sep:12}, {i:'star', ml:-1}, {i:'layersel', on:1, w:28, ml:1}, {i:'flag'}, {i:'flaglist', ml:2}, {i:'cloud'}, {i:'housecheck'}, {i:'houses'}, {i:'sheet'},
    {i:'info', w:31}, {i:'paint', dim:1}, {i:'tag'}, {sep:10}, {i:'cube'}, {ch:1, w:16}, {i:'delta'}, {ch:1, w:14},
];

const PLAN_TOOLS = [
    {s:'head', t:'Sichten', open:1},
    {i:'schnitt', t:'Schnitt'}, {i:'ansicht', t:'Ansicht'}, {i:'innen', t:'Innenansicht', dim:1},
    {i:'detail', t:'Detail'}, {i:'blatt', t:'Arbeitsblatt'}, {i:'kamera', t:'Kamera', dim:1},
    {s:'head', t:'Dokumentation', open:1, mt:1},
    {i:'bema', t:'Bemaßung'}, {i:'hoehe', t:'Höhenbemaßung', dim:1}, {i:'radial', t:'Radialbemaßung'}, {i:'winkel', t:'Winkelbemaßung'},
    {i:'etikett', t:'Etikett'}, {i:'textA', t:'Text'}, {i:'aend', t:'Änderung'}, {i:'raster', t:'Rasterelement'},
    {i:'schraffur', t:'Schraffur'}, {i:'linie', t:'Linie'}, {i:'kreis', t:'Kreis/Bogen'}, {i:'poly', t:'Polylinie'},
    {i:'spline', t:'Spline'}, {i:'fix', t:'Fixpunkt'}, {i:'bild', t:'Bild'}, {i:'zeichnung', t:'Zeichnung'},
];

const TREE = [
    {l:0, ch:'d', i:'root', t:'Ohne Titel'},
    {l:1, ch:'d', i:'folder', t:'Beispielausschnitte'},
    {l:2, ch:'d', i:'folder', t:'Arbeitseinstellung'},
    {l:3, ch:'d', i:'planBadge', t:'Geschosse'},
    {l:4, i:'planTree', t:'1. OG'},
    {l:4, i:'planTree', t:'0. EG'},
    {l:4, i:'planTree', t:'-1. UG'},
    {l:3, ch:'d', i:'elevBadge', t:'Ansichten'},
    {l:4, i:'elevTree', t:'A-01 Ansicht', on:1},
    {l:3, i:'elevBadge', t:'Schnitte'},
    {l:3, i:'innenT', t:'Innenansichten'},
    {l:3, i:'detailT', t:'Details'},
    {l:3, i:'blattT', t:'Arbeitsblätter'},
    {l:3, i:'d3doc', t:'3D-Dokumente'},
    {l:3, ch:'r', i:'d3T', t:'3D'},
    {l:2, ch:'r', i:'folder', t:'Vorentwurfsplanung'},
    {l:2, ch:'r', i:'folder', t:'Entwurfsplanung'},
];

const SEGS = [
    {w:111, i:'zoomFit', t:'201%', center:1},
    {w:110, i:'noData', t:'keine Daten', dim:1},
    {w:110, i:'rulerS', t:'1:50', center:1},
    {w:111, i:'stack', t:'00 Arbeits...'},
    {w:110, i:'hatchS', t:'Komplette...'},
    {w:109, i:'penS', t:'04 S/W 1:2...'},
    {w:110, i:'penset', t:'00 Arbeits...'},
    {w:110, i:'overrideS', t:'Keine Über...'},
    {w:111, i:'renoS', t:'00 Reiner...'},
    {w:109, i:'structS', t:'Nur Haupt...'},
    {w:107, i:'dimS', t:'DIN 1356...', last:1},
];

function Facade() {
    return (
        <WallSvg viewBox="0 0 830 608">
            <defs>
                <filter id="stuccoDark" x="0" y="0" width="100%" height="100%" colorInterpolationFilters="sRGB">
                    <feTurbulence type="fractalNoise" baseFrequency="0.022 0.04" numOctaves="7" seed="7"/>
                    <feColorMatrix values="0 0 0 0 .72  0 0 0 0 .6  0 0 0 0 .36  1.200 0 0 0 -.55"/>
                </filter>
                <filter id="stuccoLight" x="0" y="0" width="100%" height="100%" colorInterpolationFilters="sRGB">
                    <feTurbulence type="fractalNoise" baseFrequency="0.03 0.05" numOctaves="7" seed="21"/>
                    <feColorMatrix values="0 0 0 0 .9  0 0 0 0 .8  0 0 0 0 .58  0 1.300 0 0 -.6"/>
                </filter>
                <filter id="stuccoGrain" x="0" y="0" width="100%" height="100%" colorInterpolationFilters="sRGB">
                    <feTurbulence type="fractalNoise" baseFrequency="0.1 0.15" numOctaves="4" seed="3"/>
                    <feColorMatrix values="0 0 0 0 .62  0 0 0 0 .5  0 0 0 0 .3  1.400 0 0 0 -.68"/>
                </filter>
            </defs>
            <rect width="830" height="608" fill="#d7ba7b"/>
            <rect width="830" height="608" filter="url(#stuccoDark)"/>
            <rect width="830" height="608" filter="url(#stuccoLight)"/>
            <rect width="830" height="608" filter="url(#stuccoGrain)"/>
            <rect x=".5" y=".5" width="829" height="607" fill="none" stroke="#111"/>
            <g transform="translate(-359 -240)" stroke="#1f1f1f" strokeWidth="1">
                <path d="M667 645h154l-7 8H667z" fill="#54473a" fillOpacity=".62" stroke="none"/>
                <rect x="674.500" y="343.500" width="178" height="295" fill="#555"/>
                <path d="M675 389h13v240h133v9H675z" fill="#7d7d7d" stroke="none"/>
                <rect x="688.500" y="357.500" width="150" height="272" fill="#565656"/>
                <path d="M689 401h12v216h112v12H689z" fill="#818181" stroke="none"/>
                <rect x="701.500" y="369.500" width="126" height="248" fill="#8d9190"/>
                <path d="M702 409h105v208H702z" fill="#d7dbd8" stroke="none"/>
                <path d="M702 370l125 123L702 617M702 617l62-248 63 248" fill="none"/>
                <rect x="672.500" y="638.500" width="183" height="6" fill="#b9bfbf"/>
            </g>
        </WallSvg>
    );
}

export default function App() {
    return (
        <Page>
            <Global/>
            <ToolBar>
                {TOP_TOOLS.map((t, k) => t.sep
                    ? <ToolSep key={k} $w={t.sep}/>
                    : <Tool key={k} $w={t.w} $on={t.on} $ml={t.ml}>
                        {t.ch ? <Down/> : <Ico n={t.i} s={22} dim={t.dim}/>}
                    </Tool>)}
            </ToolBar>
            <InfoRow>
                Haupt:
                <Pills>
                    <Pill><Ico n="selA" s={17}/><Right/></Pill>
                    <Pill><Ico n="selB" s={17}/><Right/></Pill>
                    <Pill $on $w={40}><Ico n="orbit" s={16}/></Pill>
                    <Pill $tall $w={47}><Ico n="arrowfilled" s={17}/><Right/></Pill>
                </Pills>
            </InfoRow>
            <Body>
                <LeftPanel>
                    <Grip/>
                    <ToolRow $on $h={27}>
                        <ToolIcon><Ico n="arrowfilled" s={24}/></ToolIcon>Pfeil
                    </ToolRow>
                    <ToolRow $h={30}>
                        <ToolIcon><Ico n="marq" s={24}/></ToolIcon>Markierungsrah...
                    </ToolRow>
                    <SectionHead><Tri/>Planung</SectionHead>
                    {PLAN_TOOLS.map((t) => t.s
                        ? <SectionHead key={t.t} $pad={2} $mt={t.mt}><Tri $open/>{t.t}</SectionHead>
                        : <ToolRow key={t.t} $dim={t.dim}>
                            <ToolIcon><Ico n={t.i} s={25} dim={t.dim}/></ToolIcon>{t.t}
                        </ToolRow>)}
                </LeftPanel>
                <Center>
                    <TabBar>
                        <GridCell><Ico n="gridtabs" s={21}/></GridCell>
                        <Tab $w={301}><Ico n="planview" s={17}/>0. EG [0. EG]</Tab>
                        <Tab $w={300} $on>
                            <CloseX><Ico n="closeX" s={11} c="#777"/></CloseX>
                            <Ico n="elev" s={17}/>[A-01 Ansicht]
                        </Tab>
                        <Tab $w={300} $edge><Ico n="d3" s={16}/>[3D / Auswahl. Geschoss 0]</Tab>
                        <TabFill/>
                        <ViewSwitch><Ico n="elevlist" s={19}/><Down/></ViewSwitch>
                    </TabBar>
                    <Canvas>
                        <Paper><Facade/></Paper>
                        <LevelText $side="left" $y={44}>00</LevelText>
                        <LevelText $side="left" $y={105}>OG</LevelText>
                        <LevelText $side="left" $y={651}>00</LevelText>
                        <LevelText $side="left" $y={713}>EG</LevelText>
                        <LevelText $side="right" $y={44}>+3,</LevelText>
                        <LevelText $side="right" $y={105}>1 O</LevelText>
                        <LevelText $side="right" $y={651}>±0,</LevelText>
                        <LevelText $side="right" $y={713}>0 E</LevelText>
                        <LevelLine $side="left" $y={102}/>
                        <LevelLine $side="right" $y={102}/>
                        <LevelLine $side="left" $y={709}/>
                        <LevelLine $side="right" $y={709}/>
                        <Mark>×</Mark>
                        <Handle $at="left"/>
                        <Handle $at="right"/>
                        <Handle $at="bottom"/>
                    </Canvas>
                    <StatusItems>
                        <NavGroup>
                            <Ico n="zoomBack" s={17}/>
                            <Ico n="zoomNext" s={17} dim/>
                            <Ico n="zoomIn" s={17}/>
                        </NavGroup>
                        {SEGS.map((g, k) => (
                            <Seg key={k} $w={g.w} $dim={g.dim} $last={g.last}>
                                <Ico n={g.i} s={16} dim={g.dim}/>
                                <SegLabel $center={g.center}>{g.t}</SegLabel>
                                <Right $s={9} $c={g.dim ? '#aaa' : '#222'}/>
                            </Seg>
                        ))}
                    </StatusItems>
                </Center>
                <RightPanel>
                    <PanelTabs>
                        <GripTop/>
                        <PanelTab $w={32}><Ico n="elev3d" s={21}/></PanelTab>
                        <ToolSep $w={12}/>
                        <PanelTab $w={29} $on><Ico n="sheetView" s={21}/></PanelTab>
                        <PanelTab><Ico n="planCorner" s={21}/></PanelTab>
                        <PanelTab><Ico n="windows" s={19}/></PanelTab>
                        <MenuPill><Ico n="menuLines" s={15}/><Right/></MenuPill>
                    </PanelTabs>
                    <SearchBox><Ico n="search" s={15}/>Ausschnitt-Mappe durch</SearchBox>
                    <TreeWrap>
                        <TreeList>
                            {TREE.map((r) => (
                                <TreeRow key={r.t} $level={r.l} $on={r.on}>
                                    <TreeChev>
                                        {r.ch === 'd' && <Down $c="#777"/>}
                                        {r.ch === 'r' && <Right $c="#777"/>}
                                    </TreeChev>
                                    <TreeIcon><Ico n={r.i} s={19}/></TreeIcon>{r.t}
                                </TreeRow>
                            ))}
                        </TreeList>
                        <VScroll/>
                    </TreeWrap>
                    <HScroll/>
                    <IconRow>
                        <IconCell><Ico n="newView" s={21}/></IconCell>
                        <IconCell><Ico n="newClone" s={21}/></IconCell>
                        <IconCell><Ico n="newFolder" s={21}/></IconCell>
                        <IconCell><Ico n="list" s={17}/></IconCell>
                        <IconCell><Ico n="cross" s={17}/></IconCell>
                    </IconRow>
                    <DescHead><Tri $open/>Beschreibungen</DescHead>
                    <IdRow>
                        <IconCell $w={17}><Ico n="elevSmall" s={15}/></IconCell>
                        <IdField $w={31} $ml={-1}>A-01</IdField>
                        <IdField>Ansicht</IdField>
                    </IdRow>
                    <DescRow $mt={-1}><Ico n="stack" s={15}/>00 Arbeitseinstellung</DescRow>
                    <DescRow><Ico n="rulerS" s={15}/>1:100</DescRow>
                    <DescRow><Ico n="penset" s={15}/>00 Arbeitseinstellung</DescRow>
                    <WideButton>Einstellungen...</WideButton>
                    <Grip $w={70} $m="7px 0 4px 56px"/>
                    <NavRow>
                        <NavBox><Ico n="navFrame" s={20}/></NavBox>
                        <NavBox $grow $pale $end><Right $c="#999"/></NavBox>
                    </NavRow>
                    <IconRow $h={39} $line>
                        <IconCell><Ico n="fitIn" s={19} dim/></IconCell>
                        <IconCell/>
                        <IconCell><Ico n="moveN" s={19}/></IconCell>
                        <IconCell><Ico n="rotateN" s={19}/></IconCell>
                        <IconCell><Ico n="flipN" s={19}/></IconCell>
                        <IconCell><Ico n="syncN" s={18} dim/></IconCell>
                    </IconRow>
                    <PanelLabel $h={26}>Transparentpause:</PanelLabel>
                    <SliderRow>
                        <NavBox><Swatch/><Right $c="#777"/></NavBox>
                        <Slider><Thumb/></Slider>
                        <NavBox $grow $end><Right $c="#888"/></NavBox>
                    </SliderRow>
                    <PanelLabel $h={25}>Aktiv:</PanelLabel>
                    <SliderRow>
                        <NavBox>
                            <svg width="13" height="13" viewBox="0 0 24 24">
                                <path d="M12 12V0a12 12 0 0 1 10.400 18z" fill="#e2968a"/>
                                <path d="M12 12l10.400 6a12 12 0 0 1-20.800 0z" fill="#7fa6ec"/>
                                <path d="M12 12L1.600 18A12 12 0 0 1 12 0z" fill="#86bd8a"/>
                            </svg>
                            <Right $c="#777"/>
                        </NavBox>
                        <Slider><Thumb/></Slider>
                    </SliderRow>
                    <IconRow $h={8} $line/>
                    <IconRow $h={36} $pad={31}>
                        <IconCell><Ico n="handN" s={20}/></IconCell>
                        <IconCell><Ico n="overlapN" s={18}/></IconCell>
                        <IconCell><Ico n="splitN" s={18}/></IconCell>
                        <IconCell><Ico n="hatchN" s={18}/></IconCell>
                    </IconRow>
                </RightPanel>
            </Body>
            <BottomBar>
                <Hint>Klicken Sie mit dem Cursor auf ein Element oder ziehen Sie einen Auswahlbereich auf. Drücken Sie für Morphbearbeitung Strg/Ctrl+Umsch, um zwischen Element-/Unterelement-Auswahl zu wechseln.</Hint>
                <Brand>
                    <Ico n="windows" s={18}/>
                    <i/>
                    <span>GRAPHISOFT <em>ID</em></span>
                </Brand>
            </BottomBar>
            <Menu>
                <MenuItem>Letzte relevante Ausschnitte<MenuNext><Right $s={12}/></MenuNext></MenuItem>
                <MenuSep/>
                <MenuItem>Als Ausschnitt sichern...</MenuItem>
                <MenuItem><Ico n="penMenu" s={19}/>Ausschnitt-Einstellungen aufnehmen</MenuItem>
                <MenuItem>Die letzten Einstellungen übernehmen</MenuItem>
                <MenuItem>Einstellungen auf die anderen Tabs übertragen</MenuItem>
                <MenuSep/>
                <MenuItem>Als Transparentpause anzeigen</MenuItem>
                <MenuItem $on><Ico n="elevMenu" s={19} c="#fff"/>Ansicht-Einstellungen...</MenuItem>
                <MenuSep $m={5}/>
                <MenuItem>Tab abdocken</MenuItem>
                <MenuItem>Alle anderen Tabs und Fenster schließen</MenuItem>
                <MenuItem><Ico n="closeTab" s={19}/>Tab A-01 Ansicht schließen</MenuItem>
                <PinkBox/>
            </Menu>
        </Page>
    );
}
